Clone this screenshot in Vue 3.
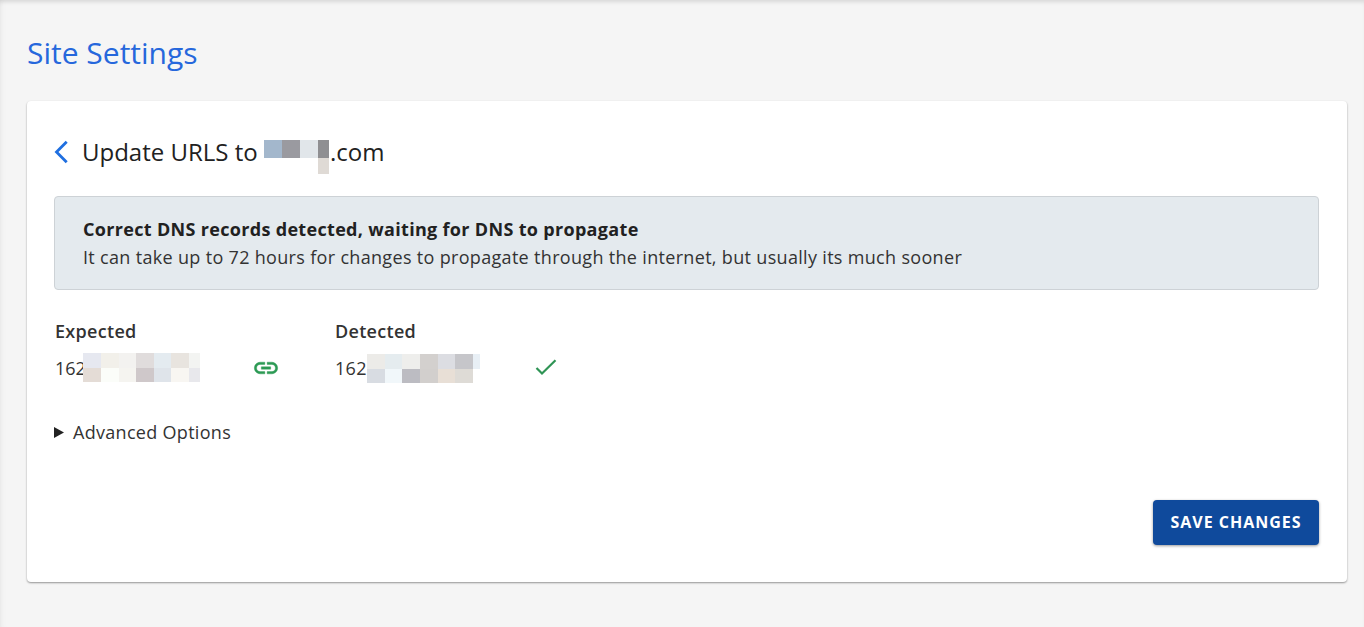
<script setup>
const domainCells = [
  ['#a3b7cc', 18, 18], ['#9a9aa0', 18, 18], ['#e1e6ea', 18, 18], ['#8f8f92', 11, 18],
  ['transparent', 18, 16], ['transparent', 18, 16], ['transparent', 18, 16], ['#dfdad5', 11, 16],
]
const w1 = [18, 18, 17, 18, 17, 18, 11]
const expectedCells = ['#e6e8f0', '#f2f0ea', '#f3f2f0', '#e0dcdc', '#e4ebf0', '#e8e4df', '#f3f4f2', '#e4dcd6', '#fbfdf9', '#f5f4f0', '#cfc8ca', '#dfe4ea', '#f8f6f2', '#e8e8ec']
const w2 = [18, 17, 18, 18, 17, 18, 7]
const detectedCells = ['#ecebe8', '#e5ecef', '#eeeeec', '#d3d0ce', '#dcdde2', '#c6c6ca', '#e8eff5', '#d8dce2', '#f1f7fa', '#bcbcc2', '#d2cfcd', '#e8dfd6', '#dedbd6', '#ffffff']
const gridCols = (w) => w.map((v) => v + 'px').join(' ')
</script>

<template>
  <div class="page">
    <h1 class="page-title">Site Settings</h1>
    <section class="card">
      <header class="head">
        <svg class="back" width="16" height="24" viewBox="0 0 16 24" fill="none">
          <path d="M12.7 1.8 L2.5 12 L12.7 22.2" stroke="#1f6fe0" stroke-width="2.8" />
        </svg>
        <h2 class="head-title">Update URLS to <span class="domain"><span class="domain-mosaic"><i v-for="(c, i) in domainCells" :key="i" :style="{ background: c[0], width: c[1] + 'px', height: c[2] + 'px' }"></i></span></span>.com</h2>
      </header>

      <div class="alert">
        <strong>Correct DNS records detected, waiting for DNS to propagate</strong>
        <span>It can take up to 72 hours for changes to propagate through the internet, but usually its much sooner</span>
      </div>

      <div class="records">
        <div class="record rec-exp">
          <div class="rec-label">Expected</div>
          <div class="rec-value">162<span class="mosaic" :style="{ gridTemplateColumns: gridCols(w1) }"><i v-for="(c, i) in expectedCells" :key="i" :style="{ background: c }"></i></span></div>
        </div>
        <svg class="link-icon" width="28" height="28" viewBox="0 0 24 24" fill="#2c9a54" stroke="#2c9a54" stroke-width="0.35">
          <path d="M3.9 12c0-1.71 1.39-3.1 3.1-3.1h4V7H7c-2.76 0-5 2.24-5 5s2.24 5 5 5h4v-1.9H7c-1.71 0-3.1-1.39-3.1-3.1zM8 13h8v-2H8v2zm9-6h-4v1.9h4c1.71 0 3.1 1.39 3.1 3.1s-1.39 3.1-3.1 3.1h-4V17h4c2.76 0 5-2.24 5-5s-2.24-5-5-5z"/>
        </svg>
        <div class="record rec-det">
          <div class="rec-label">Detected</div>
          <div class="rec-value">162<span class="mosaic" :style="{ gridTemplateColumns: gridCols(w2) }"><i v-for="(c, i) in detectedCells" :key="i" :style="{ background: c }"></i></span></div>
        </div>
        <svg class="check-icon" width="24" height="24" viewBox="0 0 24 24" fill="none">
          <path d="M2.5 12 L8 17.5 L21.5 4.3" stroke="#2f9455" stroke-width="2.2" />
        </svg>
      </div>

      <div class="advanced">
        <svg class="tri" width="10" height="11" viewBox="0 0 10 11"><path d="M0 0 L10 5.5 L0 11 Z" fill="#222" /></svg>
        Advanced Options
      </div>

      <div class="actions">
        <button class="save" type="button">SAVE CHANGES</button>
      </div>
    </section>
  </div>
</template>

<style>
html, body { margin: 0; background: #f4f4f4; }
</style>

<style scoped>
.page {
  box-sizing: border-box;
  height: 627px;
  overflow: hidden;
  padding: 0 17px 0 27px;
  background: #f5f5f5;
  font-family: "Open Sans", sans-serif;
  box-shadow: inset 0 4px 4px -2px rgba(0, 0, 0, 0.12), inset 6px 0 6px -5px rgba(0, 0, 0, 0.05);
}
.page-title {
  margin: 0;
  padding-top: 32px;
  height: 101px;
  box-sizing: border-box;
  font-size: 30px;
  line-height: 41px;
  font-weight: 400;
  color: #2667dc;
}
.card {
  height: 481px;
  box-sizing: border-box;
  padding: 0 28px 0 27px;
  background: #fff;
  border-radius: 4px;
  box-shadow: 0 1px 2px rgba(0, 0, 0, 0.4);
  display: flex;
  flex-direction: column;
}
.head {
  display: flex;
  align-items: center;
  height: 95px;
  padding-top: 6px;
  box-sizing: border-box;
}
.back { margin-right: 12px; flex: none; }
.head-title {
  margin: 0;
  font-size: 24px;
  line-height: 32px;
  font-weight: 400;
  color: #212121;
  white-space: nowrap;
}
.domain { display: inline-block; width: 66px; height: 1px; position: relative; }
.domain-mosaic {
  position: absolute;
  left: 0;
  top: -20px;
  width: 65px;
  display: flex;
  flex-wrap: wrap;
}
.domain-mosaic i { display: block; flex: none; }
.alert {
  height: 94px;
  flex: none;
  box-sizing: border-box;
  padding: 0 28px;
  background: #e4eaee;
  border: 1px solid #cdd2d6;
  border-radius: 4px;
  display: flex;
  flex-direction: column;
  justify-content: center;
  font-size: 18px;
  letter-spacing: 0.32px;
  line-height: 28px;
  color: #333;
}
.alert strong { font-weight: 700; color: #212121; }
.records {
  display: flex;
  align-items: flex-start;
  margin-top: 28px;
  height: 65px;
  flex: none;
  color: #333;
  font-size: 18px;
  letter-spacing: 0.3px;
}
.record { flex: none; }
.rec-exp { width: 197px; margin-left: 1px; }
.rec-det { width: 199px; }
.rec-label { line-height: 26px; font-weight: 600; color: #333; }
.rec-value {
  display: flex;
  align-items: flex-start;
  margin-top: 9px;
  line-height: 31px;
  height: 29px;
  color: #333;
}
.rec-value .mosaic { display: grid; grid-auto-rows: 1fr; height: 29px; }
.rec-exp .rec-value { letter-spacing: 0; }
.rec-exp .mosaic { margin-left: -3px; }
.rec-det .mosaic { margin-left: 0; margin-top: 1px; }
.link-icon { margin: 36px 55px 0 0; flex: none; }
.check-icon { margin-top: 38px; flex: none; }
.advanced {
  display: flex;
  align-items: center;
  margin-top: 35px;
  font-size: 18px;
  letter-spacing: 0.3px;
  line-height: 28px;
  color: #333;
}
.tri {
  flex: none;
  margin-right: 9px;
}
.actions {
  display: flex;
  justify-content: flex-end;
  margin-top: 54px;
}
.save {
  width: 166px;
  height: 45px;
  padding: 0 0 2px;
  border: 0;
  border-radius: 4px;
  background: #0f4a9c;
  color: #fff;
  font-family: inherit;
  font-size: 16px;
  font-weight: 700;
  letter-spacing: 1px;
  box-shadow: 0 1px 3px rgba(0, 0, 0, 0.4);
}
</style>
